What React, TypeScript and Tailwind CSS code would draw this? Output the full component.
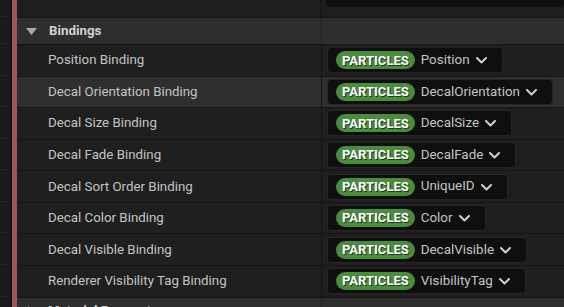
const rows = [
  { label: "Position Binding", value: "Position" },
  { label: "Decal Orientation Binding", value: "DecalOrientation", hover: true },
  { label: "Decal Size Binding", value: "DecalSize" },
  { label: "Decal Fade Binding", value: "DecalFade" },
  { label: "Decal Sort Order Binding", value: "UniqueID" },
  { label: "Decal Color Binding", value: "Color" },
  { label: "Decal Visible Binding", value: "DecalVisible" },
  { label: "Renderer Visibility Tag Binding", value: "VisibilityTag" },
];

function Dropdown({ value }: { value: string }) {
  return (
    <div className="flex h-[26px] items-center rounded-[4px] border border-[#262626] bg-[#0f0f0f] pl-[8px] pr-[15px]">
      <span className="flex h-[18px] items-center rounded-full bg-[#4b8a3f] px-[6px] text-[13px] font-bold text-white [text-shadow:1px_1px_0_#1d3a17]">
        PARTICLES
      </span>
      <span className="ml-[6px] text-[13.4px] text-[#c4c4c4]">{value}</span>
      <svg width="11" height="7" viewBox="0 0 11 7" className="ml-[6px] mt-[1px]">
        <path d="M1 1 L5.5 5.5 L10 1" fill="none" stroke="#d0d0d0" strokeWidth="2" strokeLinecap="round" strokeLinejoin="round" />
      </svg>
    </div>
  );
}

export default function App() {
  return (
    <div className="flex h-[307px] w-[564px] overflow-hidden bg-[#1c1c1c] font-['Roboto',sans-serif]">
      {/* left gutter */}
      <div className="flex w-[11px] flex-col bg-[#1a1a1a]">
        <div className="h-[17px] border-b border-[#242424]" />
        <div className="h-[27px] border-b border-[#242424]" />
        {rows.map((r) => (
          <div key={r.label} className="h-[31.57px] shrink-0 border-b border-[#242424]" />
        ))}
      </div>
      <div className="w-[1px] bg-[#111]" />
      <div className="w-[5px] bg-[#9c5858]" />

      <div className="flex flex-1 flex-col">
        {/* top row */}
        <div className="flex h-[18px] shrink-0 border-b border-[#151515] bg-[#1e1e1e]">
          <div className="w-[304px] border-r border-[#151515]" />
          <div className="flex-1 pl-[5px]">
            <div className="h-[7px] rounded-b-[4px] bg-[#0f0f0f]" />
          </div>
        </div>

        {/* header */}
        <div className="flex h-[27px] shrink-0 items-center border-b border-[#151515] bg-[#2e2e2e]">
          <div className="flex h-full w-[305px] items-center border-r border-[#232323] pl-[9px]">
            <svg width="11" height="7" viewBox="0 0 11 7" className="mr-[12px]">
              <path d="M0 0 H11 L5.5 7 Z" fill="#a8a8a8" />
            </svg>
            <span className="text-[13.3px] font-bold text-[#d2d2d2]">Bindings</span>
          </div>
        </div>

        {rows.map((r) => (
          <div
            key={r.label}
            className={`flex h-[31.57px] shrink-0 items-center border-b border-[#151515] ${
              r.hover ? "bg-[#2f2f2f]" : "bg-[#1f1f1f]"
            }`}
          >
            <div className="flex h-full w-[305px] items-center border-r border-[#151515] pl-[31px]">
              <span className="text-[13.3px] text-[#c4c4c4]">{r.label}</span>
            </div>
            <div className="flex h-full flex-1 items-center pl-[5px]">
              <Dropdown value={r.value} />
            </div>
          </div>
        ))}

        {/* next collapsed category */}
        <div className="flex h-[27px] shrink-0 items-center bg-[#2e2e2e]">
          <div className="flex h-full w-[305px] items-center border-r border-[#232323] pl-[11px]">
            <svg width="7" height="11" viewBox="0 0 7 11" className="mr-[13px]">
              <path d="M0 0 L7 5.5 L0 11 Z" fill="#a8a8a8" />
            </svg>
            <span className="text-[13.3px] font-bold text-[#d2d2d2]">Material Parameters</span>
          </div>
        </div>
      </div>
    </div>
  );
}
